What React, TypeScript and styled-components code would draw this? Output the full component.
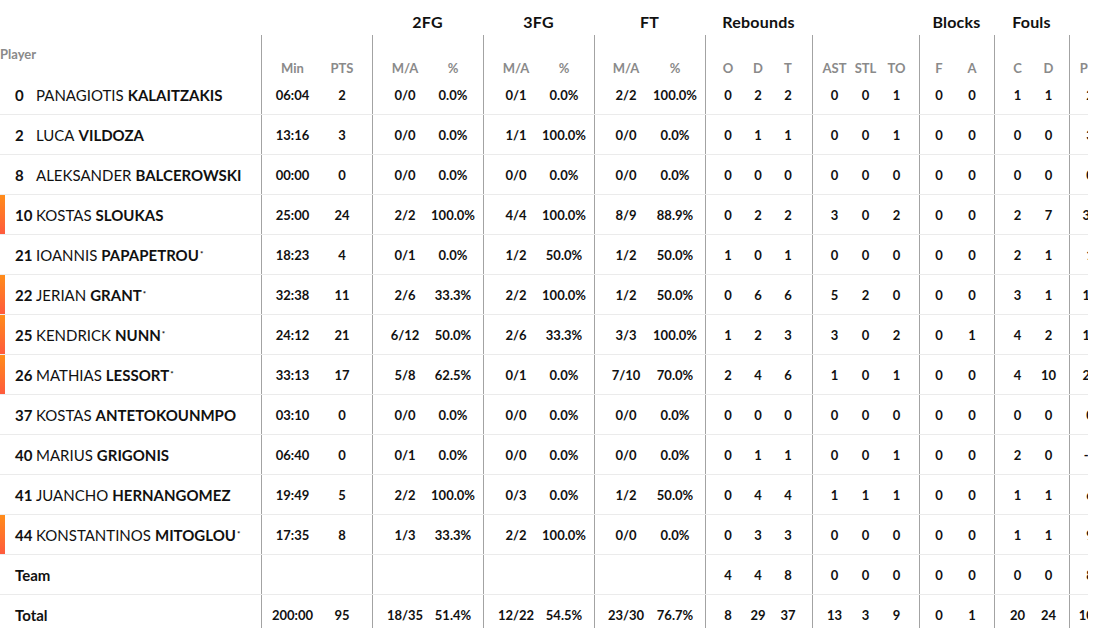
import React from "react";
import styled, { createGlobalStyle } from "styled-components";

const Global = createGlobalStyle`
  html, body { margin: 0; padding: 0; background: #fff; overflow: hidden; }
  body { font-family: Lato, "Open Sans", Arial, sans-serif; color: #111; }
`;

type GroupSpec = { w: number; pad: number; cols: string; label?: string };

const GROUPS: GroupSpec[] = [
  { w: 111, pad: 5, cols: "51px 48px" },
  { w: 111, pad: 6, cols: "52px 44px", label: "2FG" },
  { w: 111, pad: 6, cols: "52px 44px", label: "3FG" },
  { w: 111, pad: 5, cols: "52px 46px", label: "FT" },
  { w: 107, pad: 7, cols: "30px 30px 30px", label: "Rebounds" },
  { w: 107, pad: 6, cols: "31px 31px 31px" },
  { w: 75, pad: 2, cols: "34px 32px", label: "Blocks" },
  { w: 75, pad: 7, cols: "31px 31px", label: "Fouls" },
  { w: 40, pad: 1, cols: "38px" },
];

const SUBS: string[][] = [
  ["Min", "PTS"],
  ["M/A", "%"],
  ["M/A", "%"],
  ["M/A", "%"],
  ["O", "D", "T"],
  ["AST", "STL", "TO"],
  ["F", "A"],
  ["C", "D"],
  ["PIR"],
];

type Row = {
  no?: string;
  first?: string;
  last?: string;
  label?: string;
  star?: boolean;
  starter?: boolean;
  vals: string[][];
};

const E = ["", ""];
const ROWS: Row[] = [
  { no: "0", first: "PANAGIOTIS", last: "KALAITZAKIS", vals: [["06:04", "2"], ["0/0", "0.0%"], ["0/1", "0.0%"], ["2/2", "100.0%"], ["0", "2", "2"], ["0", "0", "1"], ["0", "0"], ["1", "1"], ["2"]] },
  { no: "2", first: "LUCA", last: "VILDOZA", vals: [["13:16", "3"], ["0/0", "0.0%"], ["1/1", "100.0%"], ["0/0", "0.0%"], ["0", "1", "1"], ["0", "0", "1"], ["0", "0"], ["0", "0"], ["3"]] },
  { no: "8", first: "ALEKSANDER", last: "BALCEROWSKI", vals: [["00:00", "0"], ["0/0", "0.0%"], ["0/0", "0.0%"], ["0/0", "0.0%"], ["0", "0", "0"], ["0", "0", "0"], ["0", "0"], ["0", "0"], ["0"]] },
  { no: "10", first: "KOSTAS", last: "SLOUKAS", starter: true, vals: [["25:00", "24"], ["2/2", "100.0%"], ["4/4", "100.0%"], ["8/9", "88.9%"], ["0", "2", "2"], ["3", "0", "2"], ["0", "0"], ["2", "7"], ["31"]] },
  { no: "21", first: "IOANNIS", last: "PAPAPETROU", star: true, vals: [["18:23", "4"], ["0/1", "0.0%"], ["1/2", "50.0%"], ["1/2", "50.0%"], ["1", "0", "1"], ["0", "0", "0"], ["0", "0"], ["2", "1"], ["1"]] },
  { no: "22", first: "JERIAN", last: "GRANT", star: true, starter: true, vals: [["32:38", "11"], ["2/6", "33.3%"], ["2/2", "100.0%"], ["1/2", "50.0%"], ["0", "6", "6"], ["5", "2", "0"], ["0", "0"], ["3", "1"], ["15"]] },
  { no: "25", first: "KENDRICK", last: "NUNN", star: true, starter: true, vals: [["24:12", "21"], ["6/12", "50.0%"], ["2/6", "33.3%"], ["3/3", "100.0%"], ["1", "2", "3"], ["3", "0", "2"], ["0", "1"], ["4", "2"], ["16"]] },
  { no: "26", first: "MATHIAS", last: "LESSORT", star: true, starter: true, vals: [["33:13", "17"], ["5/8", "62.5%"], ["0/1", "0.0%"], ["7/10", "70.0%"], ["2", "4", "6"], ["1", "0", "1"], ["0", "0"], ["4", "10"], ["20"]] },
  { no: "37", first: "KOSTAS", last: "ANTETOKOUNMPO", vals: [["03:10", "0"], ["0/0", "0.0%"], ["0/0", "0.0%"], ["0/0", "0.0%"], ["0", "0", "0"], ["0", "0", "0"], ["0", "0"], ["0", "0"], ["0"]] },
  { no: "40", first: "MARIUS", last: "GRIGONIS", vals: [["06:40", "0"], ["0/1", "0.0%"], ["0/0", "0.0%"], ["0/0", "0.0%"], ["0", "1", "1"], ["0", "0", "1"], ["0", "0"], ["2", "0"], ["-2"]] },
  { no: "41", first: "JUANCHO", last: "HERNANGOMEZ", vals: [["19:49", "5"], ["2/2", "100.0%"], ["0/3", "0.0%"], ["1/2", "50.0%"], ["0", "4", "4"], ["1", "1", "1"], ["0", "0"], ["1", "1"], ["6"]] },
  { no: "44", first: "KONSTANTINOS", last: "MITOGLOU", star: true, starter: true, vals: [["17:35", "8"], ["1/3", "33.3%"], ["2/2", "100.0%"], ["0/0", "0.0%"], ["0", "3", "3"], ["0", "0", "0"], ["0", "0"], ["1", "1"], ["9"]] },
  { label: "Team", vals: [E, E, E, E, ["4", "4", "8"], ["0", "0", "0"], ["0", "0"], ["0", "0"], ["8"]] },
  { label: "Total", vals: [["200:00", "95"], ["18/35", "51.4%"], ["12/22", "54.5%"], ["23/30", "76.7%"], ["8", "29", "37"], ["13", "3", "9"], ["0", "1"], ["20", "24"], ["106"]] },
];

const Board = styled.div`
  width: 1088px;
  overflow: hidden;
  font-family: Lato, "Open Sans", Arial, sans-serif;
`;

const TopHeader = styled.div`
  display: flex;
  height: 35px;
  box-sizing: border-box;
  padding-top: 8px;
  align-items: center;
  white-space: nowrap;
`;

const SubHeader = styled.div`
  display: flex;
  height: 40px;
  white-space: nowrap;
`;

const DataRow = styled.div`
  display: flex;
  height: 40px;
  box-sizing: border-box;
  border-bottom: 1px solid #ebebeb;
  white-space: nowrap;
`;

const PlayerSpacer = styled.div`
  flex: 0 0 261px;
`;

const PlayerHead = styled.div`
  flex: 0 0 261px;
  font-size: 13px;
  font-weight: 700;
  color: #8a8a8a;
  line-height: 14px;
  padding-top: 12px;
  box-sizing: border-box;
`;

const PlayerCell = styled.div`
  flex: 0 0 261px;
  display: flex;
  align-items: center;
  font-size: 15px;
  color: #111;
`;

const Marker = styled.div<{ $on?: boolean }>`
  align-self: stretch;
  width: 5px;
  flex: 0 0 5px;
  background: ${(p) => (p.$on ? "linear-gradient(180deg, #ff8c1a 0%, #ff5b3d 100%)" : "transparent")};
`;

const Num = styled.span`
  width: 21px;
  margin-left: 10px;
  font-weight: 700;
`;

const First = styled.span`
  font-weight: 400;
  margin-right: 4px;
`;

const Last = styled.span`
  font-weight: 700;
`;

const Star = styled.sup`
  font-size: 8px;
  font-weight: 700;
  vertical-align: top;
  line-height: 1;
  position: relative;
  top: -1px;
  margin-left: 1px;
`;

const RowLabel = styled.span`
  margin-left: 10px;
  font-weight: 700;
`;

const GroupLabel = styled.div<{ $w: number }>`
  flex: 0 0 ${(p) => p.$w}px;
  text-align: center;
  font-size: 16px;
  font-weight: 700;
  letter-spacing: 0.2px;
  color: #111;
`;

const Group = styled.div<{ $w: number; $pad: number; $cols: string; $end?: boolean }>`
  flex: 0 0 ${(p) => p.$w}px;
  box-sizing: border-box;
  border-left: 1px solid #a3a3a3;
  padding-left: ${(p) => p.$pad}px;
  display: grid;
  grid-template-columns: ${(p) => p.$cols};
  align-items: ${(p) => (p.$end ? "end" : "center")};
`;

const SubLabel = styled.div`
  text-align: center;
  font-size: 13px;
  font-weight: 700;
  color: #8a8a8a;
  line-height: 14px;
`;

const Val = styled.div`
  text-align: center;
  font-size: 13px;
  font-weight: 700;
  color: #111;
`;

export default function App() {
  return (
    <>
      <Global />
      <Board>
        <TopHeader>
          <PlayerSpacer />
          {GROUPS.map((g, i) => (
            <GroupLabel key={i} $w={g.w}>
              {g.label ?? ""}
            </GroupLabel>
          ))}
        </TopHeader>
        <SubHeader>
          <PlayerHead>Player</PlayerHead>
          {GROUPS.map((g, i) => (
            <Group key={i} $w={g.w} $pad={g.pad} $cols={g.cols} $end>
              {SUBS[i].map((s, j) => (
                <SubLabel key={j}>{s}</SubLabel>
              ))}
            </Group>
          ))}
        </SubHeader>
        {ROWS.map((r, ri) => (
          <DataRow key={ri}>
            <PlayerCell>
              <Marker $on={r.starter} />
              {r.label ? (
                <RowLabel>{r.label}</RowLabel>
              ) : (
                <>
                  <Num>{r.no}</Num>
                  <First>{r.first}</First>
                  <Last>{r.last}</Last>
                  {r.star && <Star>*</Star>}
                </>
              )}
            </PlayerCell>
            {GROUPS.map((g, i) => (
              <Group key={i} $w={g.w} $pad={g.pad} $cols={g.cols}>
                {r.vals[i].map((v, j) => (
                  <Val key={j}>{v}</Val>
                ))}
              </Group>
            ))}
          </DataRow>
        ))}
      </Board>
    </>
  );
}
